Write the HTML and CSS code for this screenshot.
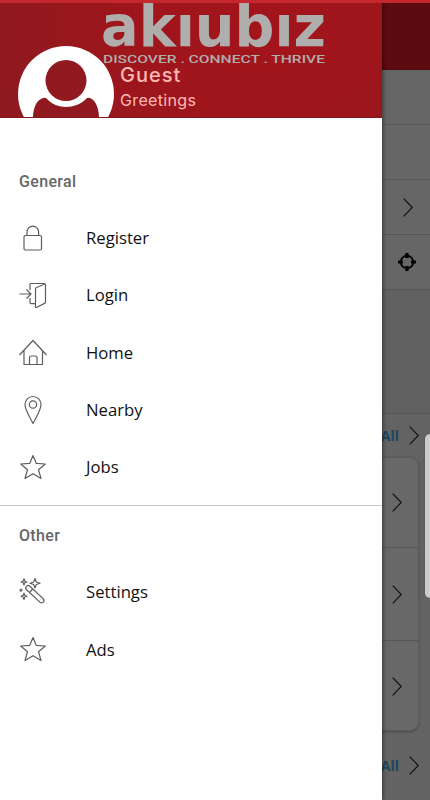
FILE: index.html
```html
<!DOCTYPE html>
<html lang="en">
<head>
<meta charset="utf-8">
<title>Akiubiz</title>
<link rel="stylesheet" href="styles.css">
</head>
<body>
<svg class="defs" width="0" height="0">
  <symbol id="chevron" viewBox="0 0 10 19"><path d="M.7.7 9.3 9.5.7 18.3"/></symbol>
  <symbol id="star" viewBox="0 0 28 28"><path d="M14 2.500 17.300 10.400 26.300 11 19.500 16.700 22 25.500 14 20.700 6 25.500 8.500 16.700 1.700 11 10.700 10.400Z"/></symbol>
</svg>
<div class="screen">
  <div class="status"></div>
  <main class="page">
    <div class="appbar"></div>
    <div class="row"></div>
    <div class="row"></div>
    <div class="row"><svg class="chev"><use href="#chevron"/></svg></div>
    <div class="row locate"><svg width="20" height="20" viewBox="0 0 20 20"><circle cx="10" cy="10" r="6.300" fill="none" stroke="#000" stroke-width="1.700"/><path d="M10 1v5M10 14v5M1 10h5M14 10h5" stroke="#000" stroke-width="3.200"/></svg></div>
    <div class="banner"></div>
    <div class="more"><span>All</span><svg class="chev"><use href="#chevron"/></svg></div>
    <div class="card">
      <div class="item"><svg class="chev"><use href="#chevron"/></svg></div>
      <div class="item"><svg class="chev"><use href="#chevron"/></svg></div>
      <div class="item"><svg class="chev"><use href="#chevron"/></svg></div>
    </div>
    <div class="more second"><span>All</span><svg class="chev"><use href="#chevron"/></svg></div>
  </main>
  <aside class="drawer">
    <header class="head">
      <svg class="brand" width="382" height="64" viewBox="0 3 382 64">
        <text class="logo" x="101" y="46" textLength="225" lengthAdjust="spacingAndGlyphs">akıubız</text>
        <text class="tag" x="103" y="63" textLength="222" lengthAdjust="spacingAndGlyphs">DISCOVER . CONNECT . THRIVE</text>
      </svg>
      <div class="profile">
        <svg class="avatar" width="96" height="72" viewBox="0 0 96 72"><circle cx="48" cy="48" r="48" fill="#fff"/><path class="body" d="M15 72C15 61 19 54 25 52Q28 51 30 54Q37 61 48 61T67 54Q69 51 72 52C77 54 81 61 81 72Z"/><circle class="face" cx="48" cy="34.500" r="20.500"/></svg>
        <div class="who"><div class="name">Guest</div><div class="hello">Greetings</div></div>
      </div>
    </header>
    <nav>
      <h2>General</h2>
      <a><svg viewBox="0 0 28 28"><rect x="5" y="11.500" width="17.500" height="14.500" rx="1.500"/><path d="M8 11V8a5.800 5.800 0 0 1 11.600 0v3"/></svg>Register</a>
      <a><svg viewBox="0 0 28 28"><path d="M11 9V3.500Q11 2.500 12 2.500H25Q26.500 2.500 26.500 4V21Q26.500 22 25.500 22.400L18 26.300Q16.500 27 16.500 25.500V8Q16.500 7 17.500 6.500L26 3M11 17v4.500q0 1.200 1 1.200h4.500M.5 13h11M7.500 8.500 12 13l-4.500 4.500"/></svg>Login</a>
      <a><svg viewBox="0 0 28 28"><path d="M.5 17 14 2.500 27.500 17M5 12.500v14h18.500v-14M10.500 26.500V19.500q0-1.500 1.500-1.500h4.500Q18 18 18 19.500v7"/></svg>Home</a>
      <a><svg viewBox="0 0 28 28"><path d="M14 27.500C12 23 6 14.500 6 8.500a8 8 0 0 1 16 0C22 14.500 16 23 14 27.500Z"/><circle cx="14" cy="8.500" r="3.700"/></svg>Nearby</a>
      <a><svg><use href="#star"/></svg>Jobs</a>
    </nav>
    <nav class="other">
      <h2>Other</h2>
      <a><svg viewBox="0 0 28 28"><g transform="translate(9.200 10) rotate(43)"><rect x="-2.400" y="-2.400" width="23" height="4.800" rx="2.400"/><path d="M4-2.400v4.800"/></g><path d="M16 .5 17.300 4 21 5.200 17.300 6.500 16 10 14.700 6.500 11 5.200 14.700 4ZM5 .8l.8 2.400L8 4l-2.200.8L5 7l-.8-2.200L2 4l2.200-.8ZM5 15l.8 2.400 2.200.8-2.200.8L5 21.500 4.200 19 2 18.200l2.200-.8ZM2 10.500v3.500M.3 12.200h3.400"/></svg>Settings</a>
      <a><svg><use href="#star"/></svg>Ads</a>
    </nav>
  </aside>
  <div class="handle"></div>
</div>
</body>
</html>
```
FILE: styles.css
```css
* { box-sizing: border-box; }
body { margin: 0; }
.defs { position: absolute; }
.screen { position: relative; width: 430px; height: 800px; overflow: hidden; background: #636363; }
.status { position: relative; z-index: 2; height: 3px; background: #c4272d; }
.appbar { height: 67px; background: #5d0a10; border-bottom: 1px solid #4d090d; }
.row { display: flex; align-items: center; justify-content: flex-end; height: 55px; padding-right: 17px; background: #666; border-bottom: 1px solid #555; }
.locate { padding-right: 13px; }
.chev { display: block; width: 10px; height: 19px; fill: none; stroke: #0c0c0c; stroke-width: 1.100; }
.banner { height: 124px; background: #616161; border-bottom: 1px solid #555; }
.more { display: flex; align-items: center; justify-content: flex-end; gap: 10px; height: 43px; padding-right: 11px; font: 700 14px "Open Sans", sans-serif; color: #20455f; }
.card { width: 419px; height: 274px; background: #686868; border: 1px solid #5b5b5b; border-radius: 9px; box-shadow: 0 1px 2px #484848; }
.item { display: flex; align-items: center; justify-content: flex-end; height: 89px; padding-right: 16px; }
.item + .item { height: 93px; border-top: 1px solid #565656; }
.item:last-child { height: 91px; }
.second { height: 68px; }
.drawer { position: absolute; left: 0; top: 3px; width: 382px; height: 797px; background: #fff; box-shadow: 1px 0 4px #0007; }
.head { position: relative; height: 115px; background: radial-gradient(ellipse 290px 180px at 255px 30px, #a3141b 0%, #9e161c 45%, #8c1a1f 100%); border-bottom: 1px solid #84161a; overflow: hidden; }
.brand { display: block; fill: #b0adad; }
.logo { font: bold 57px "DejaVu Sans", sans-serif; }
.tag { font: 500 11.500px Roboto, sans-serif; }
.profile { position: absolute; left: 18px; bottom: -1px; display: flex; gap: 6px; height: 72px; }
.avatar { display: block; }
.body, .face { fill: #901a1f; }
.who { padding-top: 16px; color: #ffb9b6; font-family: Inter, sans-serif; }
.name { font-size: 20px; line-height: 26px; font-weight: 500; letter-spacing: 1px; }
.hello { font-size: 16px; line-height: 25px; letter-spacing: .35px; }
nav { padding-top: 47px; }
h2 { margin: 0; padding: 0 19px; height: 44px; font: 500 16px/34px Roboto, sans-serif; letter-spacing: .35px; color: #666; }
nav a { display: flex; align-items: center; gap: 39px; height: 57.300px; padding-left: 19px; font: 16.700px "Open Sans", sans-serif; color: #111; }
nav a svg { width: 28px; height: 28px; overflow: visible; fill: none; stroke: #5d5d5d; stroke-width: 1.200; stroke-linejoin: round; }
.other { margin-top: 9.700px; padding-top: 13px; border-top: 1px solid #ccc; }
.handle { position: absolute; left: 425px; top: 434px; width: 10px; height: 164px; border-radius: 5px; background: #ccc; box-shadow: 0 0 2px #555; }
```
